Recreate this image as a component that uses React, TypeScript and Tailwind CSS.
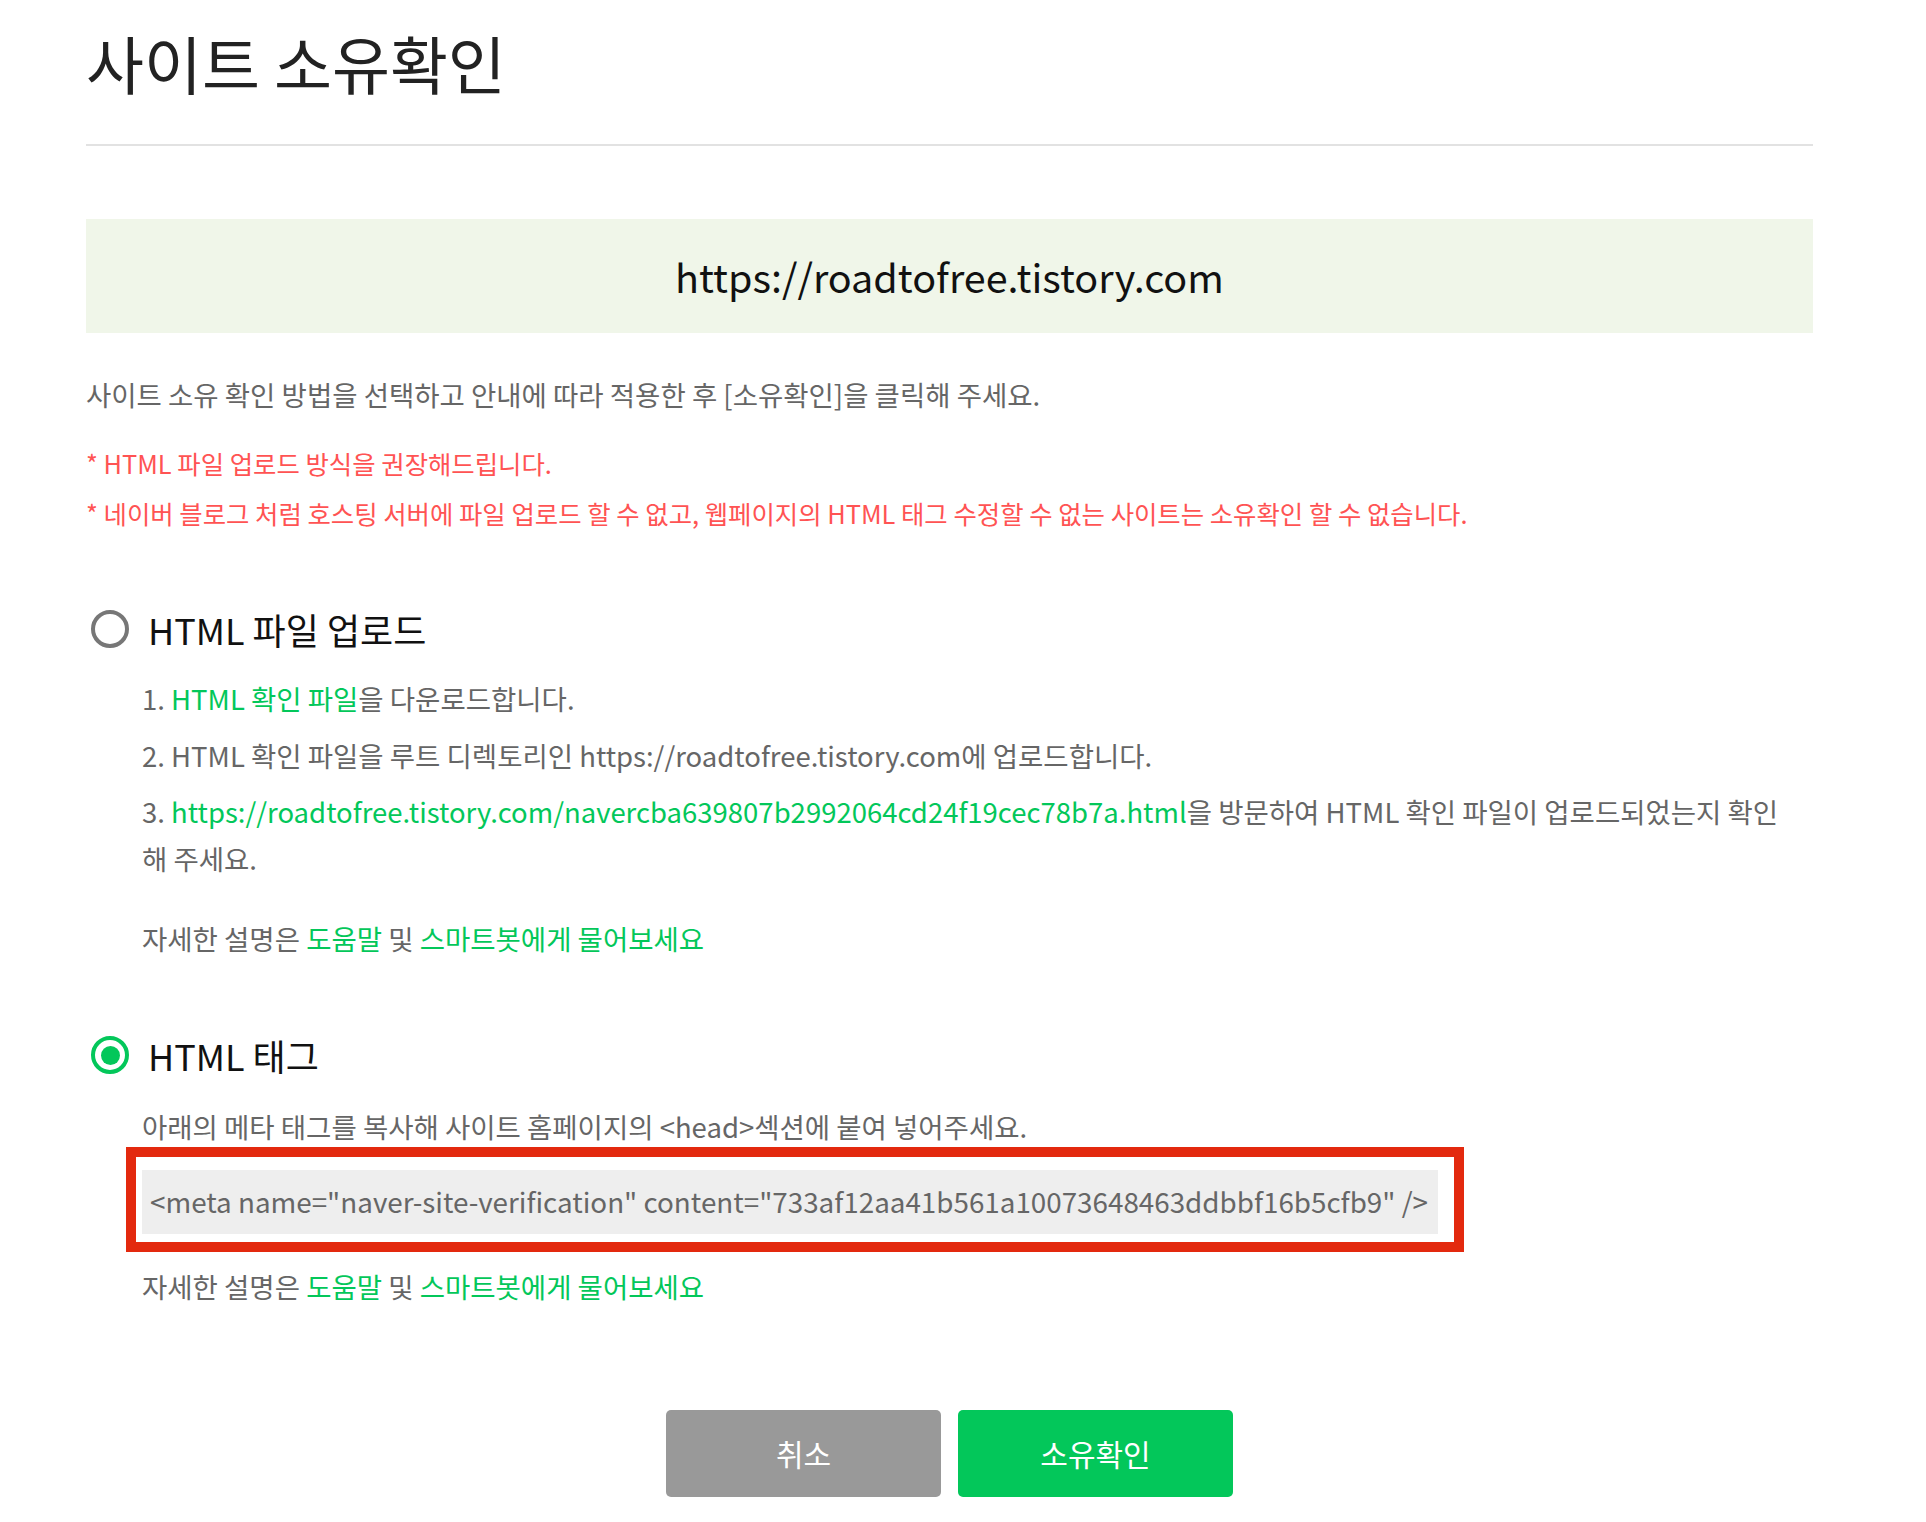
import React from "react";

function Green({ children }: { children: React.ReactNode }) {
  return <a className="text-[#03c75a] cursor-pointer">{children}</a>;
}

function Radio({ checked }: { checked?: boolean }) {
  if (checked) {
    return (
      <span className="flex w-[38px] h-[38px] shrink-0 items-center justify-center rounded-full border-4 border-[#03c75a]">
        <span className="w-[19px] h-[19px] rounded-full bg-[#03c75a]" />
      </span>
    );
  }
  return <span className="block w-[38px] h-[38px] shrink-0 rounded-full border-4 border-[#777]" />;
}

function HelpLine({ className }: { className: string }) {
  return (
    <p className={"pl-[56px] leading-[40px] text-[27.5px] text-[#666] " + className}>
      자세한 설명은 <Green>도움말</Green> 및 <Green>스마트봇에게 물어보세요</Green>
    </p>
  );
}

export default function App() {
  return (
    <div className="min-h-screen bg-white font-['Noto_Sans_CJK_KR','Noto_Sans',sans-serif] break-keep">
      <div className="ml-[86px] w-[1727px] pb-[25px]">
        <header className="h-[146px] border-b-2 border-[#e2e2e2] pt-[30px]">
          <h1 className="text-[63px] leading-[63px] font-normal text-[#222]">사이트 소유확인</h1>
        </header>

        <div className="mt-[73px] flex h-[114px] items-center justify-center bg-[#f0f6e9]">
          <span className="text-[39.5px] leading-none text-[#111]">https://roadtofree.tistory.com</span>
        </div>

        <p className="mt-[41px] text-[27.5px] leading-[40px] text-[#666]">
          사이트 소유 확인 방법을 선택하고 안내에 따라 적용한 후 [소유확인]을 클릭해 주세요.
        </p>

        <div className="mt-[24px] text-[25.4px] leading-[50px] text-[#ff5353]">
          <p>* HTML 파일 업로드 방식을 권장해드립니다.</p>
          <p>
            * 네이버 블로그 처럼 호스팅 서버에 파일 업로드 할 수 없고, 웹페이지의 HTML 태그 수정할 수 없는 사이트는
            소유확인 할 수 없습니다.
          </p>
        </div>

        {/* HTML 파일 업로드 */}
        <label className="mt-[67px] flex h-[48px] items-center gap-[19px] pl-[5px] cursor-pointer">
          <Radio />
          <span className="text-[36px] leading-none text-[#111]">HTML 파일 업로드</span>
        </label>

        <ol className="mt-[22px] ml-[56px] w-[1655px] space-y-[9.5px] text-[27.5px] leading-[47px] text-[#666]">
          <li>
            1. <Green>HTML 확인 파일</Green>을 다운로드합니다.
          </li>
          <li>2. HTML 확인 파일을 루트 디렉토리인 https://roadtofree.tistory.com에 업로드합니다.</li>
          <li>
            3. <Green>https://roadtofree.tistory.com/navercba639807b2992064cd24f19cec78b7a.html</Green>을 방문하여 HTML
            확인 파일이 업로드되었는지 확인 해 주세요.
          </li>
        </ol>

        <HelpLine className="mt-[36px]" />

        {/* HTML 태그 */}
        <label className="mt-[73px] flex h-[48px] items-center gap-[19px] pl-[5px] cursor-pointer">
          <Radio checked />
          <span className="text-[36px] leading-none text-[#111]">HTML 태그</span>
        </label>

        <p className="mt-[27px] pl-[56px] text-[27.5px] leading-[40px] text-[#666]">
          아래의 메타 태그를 복사해 사이트 홈페이지의 &lt;head&gt;섹션에 붙여 넣어주세요.
        </p>

        <div className="relative mt-[24px] ml-[56px] w-[1296px]">
          <div className="flex h-[64px] items-center bg-[#eeeeee] pl-[8px] text-[27.8px] text-[#666] whitespace-nowrap">
            {'<meta name="naver-site-verification" content="733af12aa41b561a10073648463ddbbf16b5cfb9" />'}
          </div>
          <div className="pointer-events-none absolute -left-[16px] -top-[23px] h-[105px] w-[1338px] border-[10px] border-[#e3290e]" />
        </div>

        <HelpLine className="mt-[32px]" />

        <div className="mt-[104px] flex justify-center gap-[17px]">
          <button className="h-[87px] w-[275px] rounded-[5px] bg-[#999999] text-[30px] text-white">취소</button>
          <button className="h-[87px] w-[275px] rounded-[5px] bg-[#03c75a] text-[30px] text-white">소유확인</button>
        </div>
      </div>
    </div>
  );
}
